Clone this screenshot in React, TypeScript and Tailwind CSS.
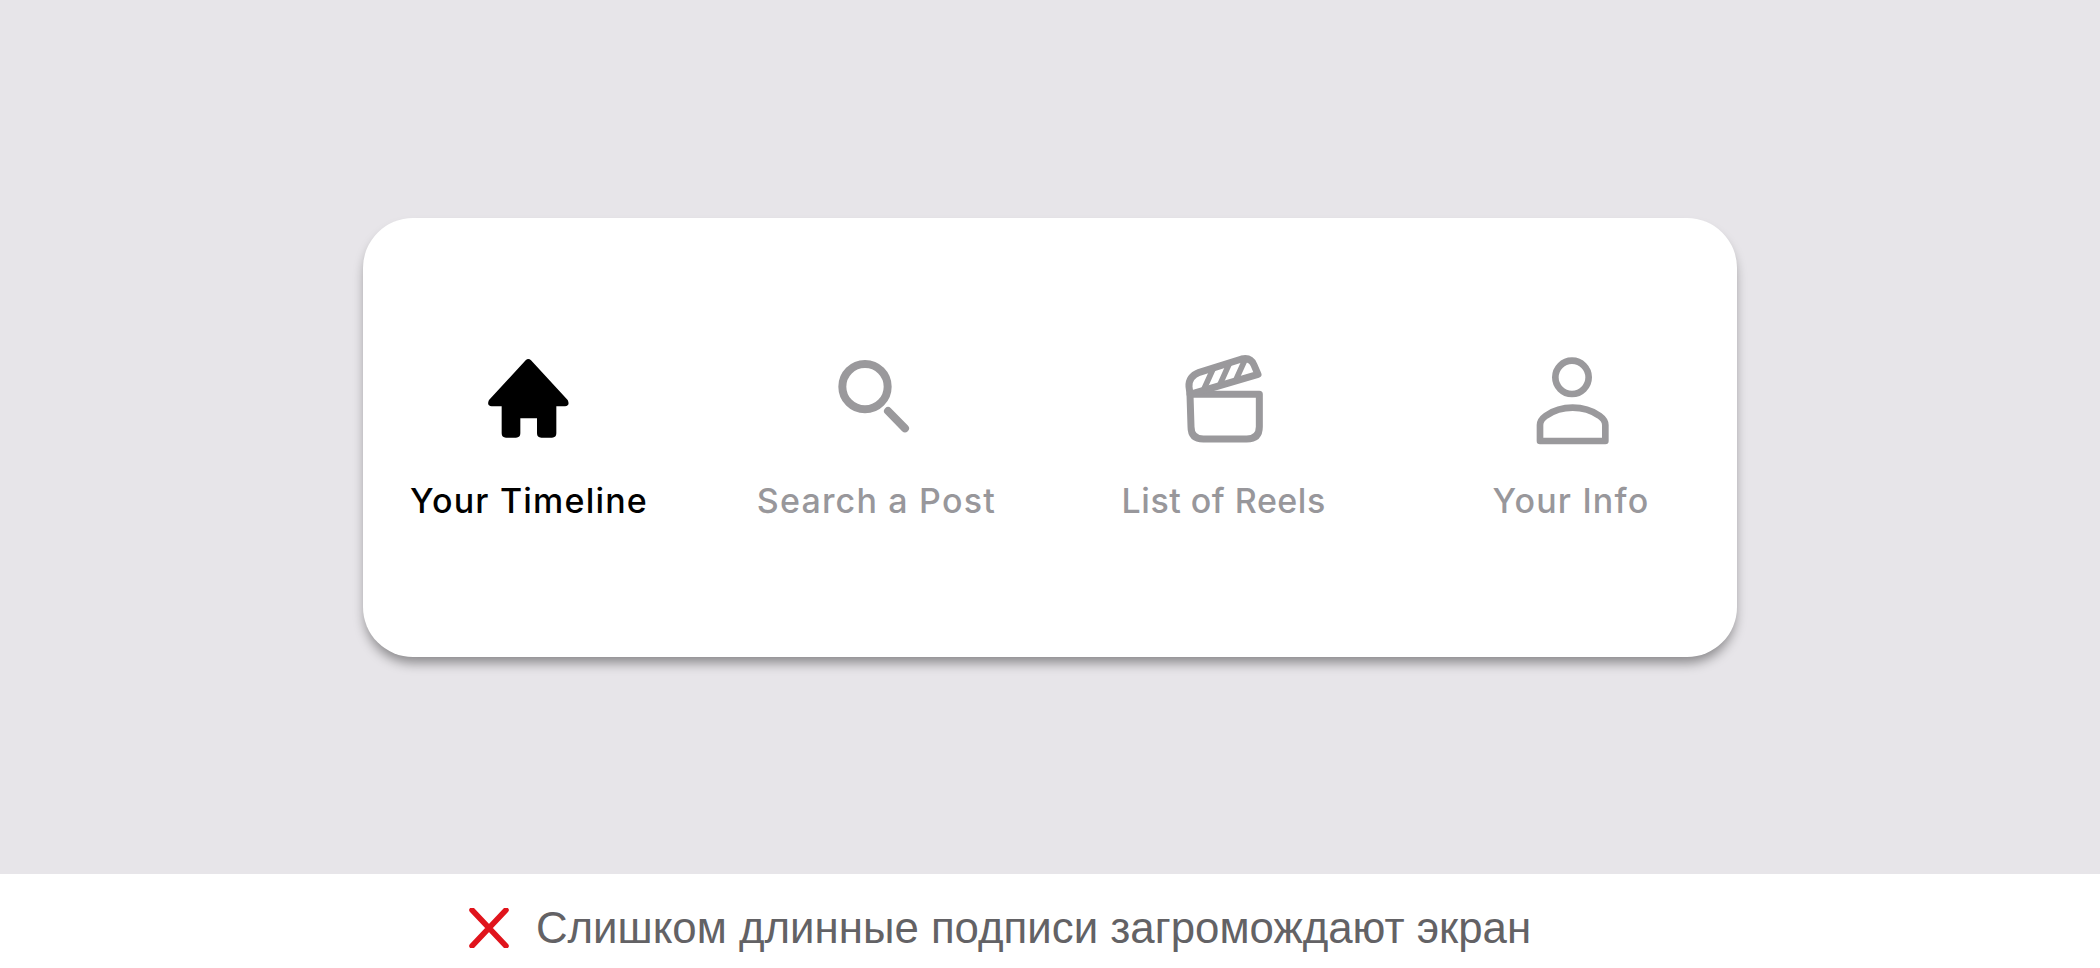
const grey = "#9a999c";

function HomeIcon() {
  return (
    <svg width="100" height="100" viewBox="0 0 300 300">
      <path
        fill="#000"
        d="M140 46 Q148 38 156 46 L266 165 Q274 182 258 184 L232 184 L232 265 Q232 278 219 278 L187 278 Q174 278 174 265 L174 220 L124 220 L124 265 Q124 278 111 278 L81 278 Q68 278 68 265 L68 184 L38 184 Q22 182 30 165 Z"
      />
    </svg>
  );
}

function SearchIcon() {
  return (
    <svg width="100" height="100" viewBox="18 0 300 300" fill="none" stroke={grey} strokeWidth="24" strokeLinecap="round">
      <circle cx="135" cy="125" r="68" />
      <path d="M204 198 L255 250" />
    </svg>
  );
}

function ReelsIcon() {
  return (
    <svg width="100" height="100" viewBox="-18 0 300 300" fill="none" stroke={grey} strokeWidth="21" strokeLinejoin="round">
      <path d="M30 148 H238 V245 Q238 282 200 282 H70 Q33 282 33 245 Z" />
      <path d="M30 148 L27 125 Q25 95 58 82 L185 42 Q212 36 222 60 L234 88 Z" />
      <path strokeWidth="17" d="M72 132 L100 70 M120 118 L148 56 M168 104 L196 42" />
    </svg>
  );
}

function PersonIcon() {
  return (
    <svg width="100" height="100" viewBox="0 0 300 300" fill="none" stroke={grey} strokeWidth="20" strokeLinejoin="round">
      <circle cx="153" cy="97" r="50" />
      <path d="M57 288 V240 Q57 225 75 212 Q110 188 155 188 Q200 188 235 212 Q253 225 253 240 V288 Z" />
    </svg>
  );
}

function Item({
  icon,
  label,
  active,
  tight,
}: {
  icon: React.ReactNode;
  label: string;
  active?: boolean;
  tight?: boolean;
}) {
  return (
    <div className="w-[280px] flex flex-col items-center">
      {icon}
      <div
        className={`mt-[34px] text-[34px] leading-[44px] font-medium font-['Inter',sans-serif] whitespace-nowrap ${
          tight ? "tracking-[0.5px]" : "tracking-[1.2px]"
        } ${active ? "text-black" : "text-[#98979b]"}`}
      >
        {label}
      </div>
    </div>
  );
}

export default function App() {
  return (
    <div className="w-[2100px] h-[968px] flex flex-col overflow-hidden bg-white">
      <div className="h-[874px] bg-[#e7e5e9] flex items-center justify-center">
        <div className="w-[1374px] h-[439px] bg-white rounded-[50px] shadow-[0_8px_12px_-2px_rgba(0,0,0,0.4)] px-[26px] pb-[6px] flex items-center justify-between">
          <Item icon={<HomeIcon />} label="Your Timeline" active />
          <Item icon={<SearchIcon />} label="Search a Post" />
          <Item icon={<ReelsIcon />} label="List of Reels" tight />
          <Item icon={<PersonIcon />} label="Your Info" />
        </div>
      </div>
      <div className="h-[94px] bg-white flex items-center justify-center gap-[27px] pr-[100px] pt-[14px]">
        <svg width="40" height="40" viewBox="0 0 40 40" fill="none" stroke="#e0141c" strokeWidth="5.5" strokeLinecap="round">
          <path d="M3 2 L37 38 M37 2 L3 38" />
        </svg>
        <div className="text-[43.8px] leading-[50px] text-[#636265] font-['Liberation_Sans',sans-serif] whitespace-nowrap">
          Слишком длинные подписи загромождают экран
        </div>
      </div>
    </div>
  );
}
